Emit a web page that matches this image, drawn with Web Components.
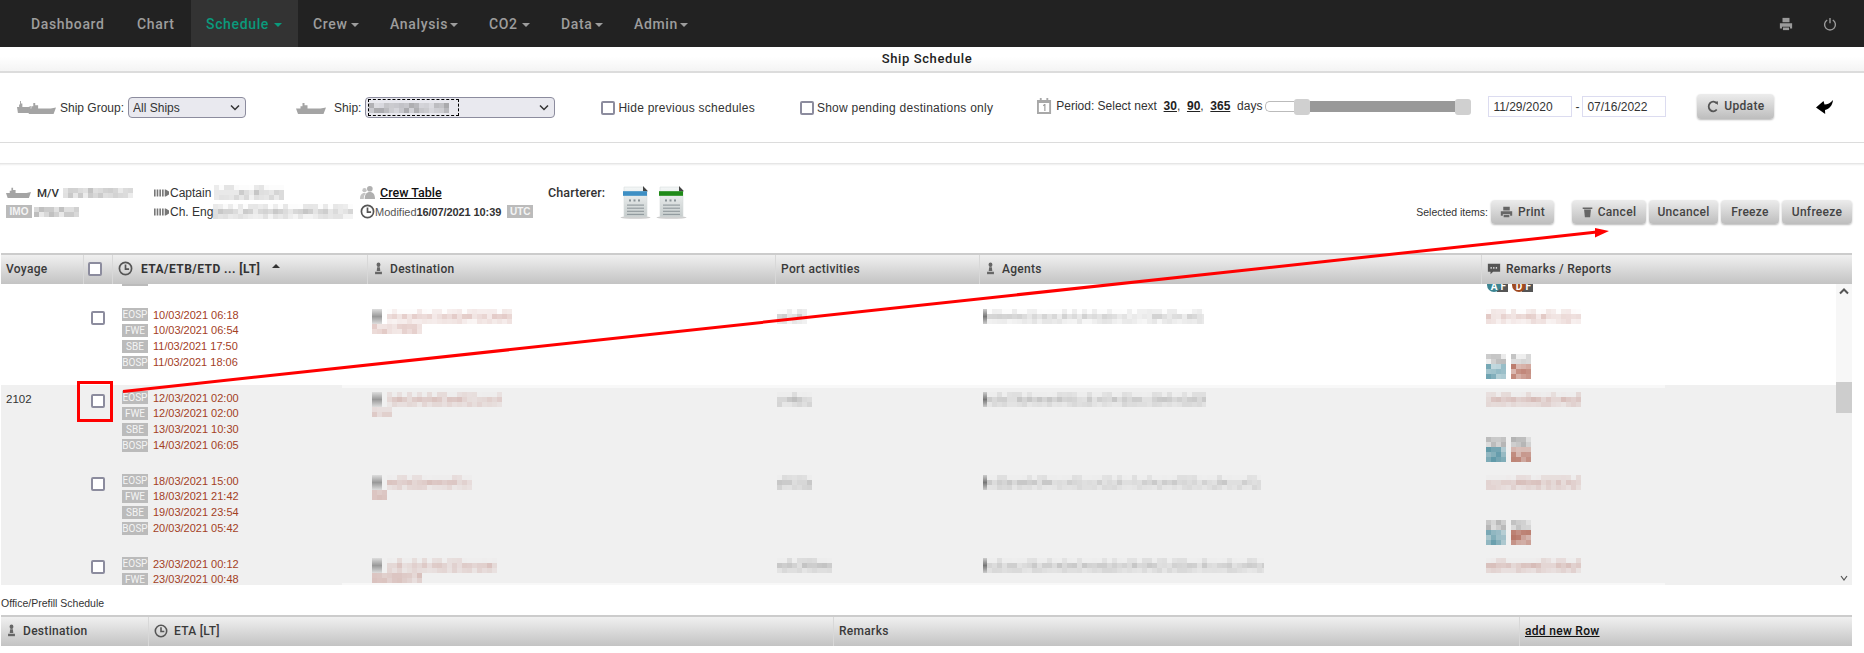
<!DOCTYPE html>
<html lang="en">
<head>
<meta charset="utf-8">
<title>Ship Schedule</title>
<style>
html,body{margin:0;padding:0;background:#fff;overflow:hidden}
body{font:11px "Liberation Sans",Arial,sans-serif;color:#333}
</style>
</head>
<body>
<schedule-page>
  <app-nav slot="nav">
    <nav-item tw="75">Dashboard</nav-item>
    <nav-item tw="38">Chart</nav-item>
    <nav-item tw="64" active menu>Schedule</nav-item>
    <nav-item tw="34" menu>Crew</nav-item>
    <nav-item tw="56" menu>Analysis</nav-item>
    <nav-item tw="29" menu>CO2</nav-item>
    <nav-item tw="30" menu>Data</nav-item>
    <nav-item tw="42" menu>Admin</nav-item>
  </app-nav>
  <page-title slot="title">Ship Schedule</page-title>
  <filter-bar slot="filters"></filter-bar>
  <info-bar slot="info"></info-bar>
  <schedule-table slot="table">
    <schedule-row seed="3" dest="125" dest2="50" port="30" agent="217" thumbs>
      <event-line code="EOSP">10/03/2021 06:18</event-line>
      <event-line code="FWE">10/03/2021 06:54</event-line>
      <event-line code="SBE">11/03/2021 17:50</event-line>
      <event-line code="BOSP">11/03/2021 18:06</event-line>
    </schedule-row>
    <schedule-row grey voyage="2102" seed="11" dest="115" dest2="20" port="35" agent="219" thumbs>
      <event-line code="EOSP">12/03/2021 02:00</event-line>
      <event-line code="FWE">12/03/2021 02:00</event-line>
      <event-line code="SBE">13/03/2021 10:30</event-line>
      <event-line code="BOSP">14/03/2021 06:05</event-line>
    </schedule-row>
    <schedule-row grey seed="23" dest="85" dest2="15" port="35" agent="274" thumbs>
      <event-line code="EOSP">18/03/2021 15:00</event-line>
      <event-line code="FWE">18/03/2021 21:42</event-line>
      <event-line code="SBE">19/03/2021 23:54</event-line>
      <event-line code="BOSP">20/03/2021 05:42</event-line>
    </schedule-row>
    <schedule-row grey seed="37" dest="110" dest2="50" port="55" agent="277">
      <event-line code="EOSP">23/03/2021 00:12</event-line>
      <event-line code="FWE">23/03/2021 00:48</event-line>
    </schedule-row>
  </schedule-table>
  <prefill-table slot="prefill"></prefill-table>
</schedule-page>

<script>
const ICONS = {
  printer:'<path d="M4 1h8v5H4z"/><path d="M1 7h14v6h-2.500v-2h-9v2H1z"/><path d="M4.500 12h7v3h-7z"/>',
  power:'<path d="M4.800 3.400a6.200 6.200 0 1 0 6.400 0" fill="none" stroke="currentColor" stroke-width="1.600"/><path d="M8 1v6" fill="none" stroke="currentColor" stroke-width="1.600"/>',
  clock:'<circle cx="8" cy="8" r="6.500" fill="none" stroke="currentColor" stroke-width="1.800"/><path d="M8 3.800V8.600h3.800" fill="none" stroke="currentColor" stroke-width="1.800"/>',
  pawn:'<circle cx="8" cy="3.500" r="2.800"/><path d="M6 6.500h4l.6 4.500H5.400z"/><path d="M3 12h10v3H3z"/>',
  comment:'<path d="M1 2h14v9H7l-3 3v-3H1z"/><g fill="#fff"><rect x="4" y="6" width="1.500" height="1.500"/><rect x="7" y="6" width="1.500" height="1.500"/><rect x="10" y="6" width="1.500" height="1.500"/></g>',
  trash:'<path d="M1 2h14v2H1z"/><path d="M3 4.500h10L11.800 15H4.200z"/>',
  refresh:'<path d="M13 4.300A6 6 0 1 0 13 11.700" fill="none" stroke="currentColor" stroke-width="2.400"/><path d="M10 2.500l4.500-1v4.500z"/>',
  crew:'<circle cx="10.500" cy="4" r="3"/><path d="M5 15c0-5 2-7.500 5.500-7.500S16 10 16 15z"/><circle cx="4.800" cy="5.500" r="2.300" opacity=".75"/><path d="M0 15c0-4 1.500-6.500 4.800-6.500 1 0 1.500.3 1.500.3C5 10 4 12 4 15z" opacity=".75"/>',
  bars:'<path d="M0 2h1.500v10H0zM2.500 2H4v10H2.500zM5 2h1.500v10H5zM7.500 2H9v10H7.500zM10 2h1l3 3v4l-3 3h-1z"/>',
  calendar:'<path d="M0 2h15v14H0z" fill="#a8a8a8"/><path d="M2 5h11v9H2z" fill="#fff"/><path d="M3 0h2v3H3zM10 0h2v3h-2z" fill="#a8a8a8"/><path d="M6.500 7l1.500-1h1v7H7.800V7.600l-1.300.6z" fill="#999"/>',
  back:'<path d="M0 7.500L7.500 1l1 3.500C11.500 4.500 14.500 3 17 0c-.4 5-3.500 9.200-8 10l.2 4z"/>'
};

function shadow(el, html){
  const r = el.attachShadow({mode:'open'});
  r.innerHTML = html;
  return r;
}

class UiIcon extends HTMLElement{
  connectedCallback(){
    const w = this.getAttribute('w')||14, h = this.getAttribute('h')||w;
    const vb = this.getAttribute('vb')||'0 0 16 16';
    shadow(this,`<style>:host{display:inline-flex;flex:none;color:${this.getAttribute('color')||'#666'}}svg{display:block;fill:currentColor}</style>
    <svg width="${w}" height="${h}" viewBox="${vb}" preserveAspectRatio="none">${ICONS[this.getAttribute('name')]}</svg>`);
  }
}
customElements.define('ui-icon',UiIcon);

class ShipIcon extends HTMLElement{
  connectedCallback(){
    shadow(this,`<style>:host{display:inline-flex;flex:none}svg{display:block}</style>
    <svg width="${this.getAttribute('w')||30}" height="${this.getAttribute('h')||13}" viewBox="0 0 30 13" preserveAspectRatio="none" fill="${this.getAttribute('color')||'#a4a4a4'}">
    <path d="M0 7h4.500V4.500h2V1h2v2.500h3V7h13L30 6 27.500 13H2z"/></svg>`);
  }
}
customElements.define('ship-icon',ShipIcon);

/* mosaic stand-in for text that the reference has pixelated away */
class PixBlock extends HTMLElement{
  connectedCallback(){
    const w=+this.getAttribute('w'), h=+this.getAttribute('h')||15, seed=+this.getAttribute('seed')||1;
    const tint={pink:'178,110,100',grey:'105,105,105',dark:'80,80,80',teal:'50,125,145',rust:'165,80,60',thumb:'120,120,120'}[this.getAttribute('tint')||'pink'];
    const lo=+this.getAttribute('lo')||.12, hi=+this.getAttribute('hi')||.36, flat=this.hasAttribute('flat');
    let x=seed*7+3, cells='';
    for(let j=0;j<h;j+=5)for(let i=0;i<w;i+=5){
      x=(x*1103515245+12345)&0x7fffffff;
      const r=((x>>8)&255)/255;
      let a=lo+(hi-lo)*r;
      if(!flat&&j===0&&h>10) a*=r>.55?.45:.1;
      if(!flat&&j+5>=h&&h>10) a*=.6;
      cells+=`<rect x="${i}" y="${j}" width="5" height="5" fill="rgba(${tint},${a.toFixed(2)})"/>`;
    }
    shadow(this,`<style>:host{display:inline-block;vertical-align:top;line-height:0;flex:none}svg{display:block}</style>
    <svg width="${w}" height="${h}" shape-rendering="crispEdges">${cells}</svg>`);
  }
}
customElements.define('pix-block',PixBlock);

class SchedulePage extends HTMLElement{
  connectedCallback(){
    shadow(this,`<style>
    :host{display:flex;flex-direction:column;position:relative;width:1864px;height:653px;overflow:hidden;background:#fff;font:11px "Liberation Sans",Arial,sans-serif;color:#333}
    .arrow{position:absolute;left:0;top:0;pointer-events:none}
    </style>
    <slot name="nav"></slot><slot name="title"></slot><slot name="filters"></slot>
    <slot name="info"></slot><slot name="table"></slot><slot name="prefill"></slot>
    <svg class="arrow" width="1864" height="653">
      <rect x="342" y="383" width="1323" height="5" fill="rgba(255,255,255,.55)"/>
      <rect x="342" y="583" width="1323" height="5" fill="rgba(255,255,255,.55)"/>
      <rect x="78.500" y="382.500" width="33" height="38" fill="none" stroke="#f00" stroke-width="3"/>
      <path d="M123 391.500L1597 232" stroke="#f00" stroke-width="3" fill="none"/>
      <path d="M1609 231L1595 228v9.500z" fill="#f00"/>
    </svg>`);
  }
}
customElements.define('schedule-page',SchedulePage);

class AppNav extends HTMLElement{
  connectedCallback(){
    shadow(this,`<style>
    :host{display:flex;align-items:stretch;height:47px;flex:none;background:#222;padding-left:15.500px}
    .tools{margin-left:auto;display:flex;align-items:center;gap:30px;padding:0 27px 0 0}
    </style><slot></slot>
    <div class="tools"><ui-icon name="printer" w="14" h="14" color="#9a9a9a"></ui-icon><ui-icon name="power" w="14" h="14" color="#9a9a9a"></ui-icon></div>`);
  }
}
customElements.define('app-nav',AppNav);

class NavItem extends HTMLElement{
  connectedCallback(){
    const act=this.hasAttribute('active'), menu=this.hasAttribute('menu');
    shadow(this,`<style>
    :host{display:flex;align-items:center;gap:4px;padding:0 15.500px;font:500 14px Roboto,sans-serif;letter-spacing:.65px;
      color:${act?'#0a9a7c':'#9d9d9d'};background:${act?'#333':'transparent'}}
    span{display:block;width:${this.getAttribute('tw')}px;white-space:nowrap}
    i{width:0;height:0;border:4px solid transparent;border-top-color:currentColor;border-bottom:0;margin-top:2px}
    </style><span><slot></slot></span>${menu?'<i></i>':''}`);
  }
}
customElements.define('nav-item',NavItem);

class PageTitle extends HTMLElement{
  connectedCallback(){
    shadow(this,`<style>
    :host{display:block;flex:none;height:24px;padding-right:10px;text-align:center;font:500 13px/24px Roboto,sans-serif;color:#222;letter-spacing:.6px;
      background:linear-gradient(#fff 40%,#f4f4f4);border-bottom:2px solid #dcdcdc}
    </style><slot></slot>`);
  }
}
customElements.define('page-title',PageTitle);

const CHECK = `input[type=checkbox]{appearance:none;-webkit-appearance:none;margin:0;width:14px;height:14px;box-sizing:border-box;border:2px solid #8c8c9e;border-radius:2px;background:#fff;flex:none;display:block}`;

class FilterBar extends HTMLElement{
  connectedCallback(){
    shadow(this,`<style>
    :host{display:flex;align-items:center;flex:none;height:70px;box-sizing:border-box;border-bottom:1px solid #dcdcdc;font:12px "Liberation Sans",Arial,sans-serif;color:#333;padding-left:17px}
    ${CHECK}
    .group{position:relative;display:inline-flex;width:39px;height:15px;flex:none}
    .group ship-icon:last-child{margin-left:-4px;margin-top:2px}
    .sel{position:relative;box-sizing:border-box;height:21px;border:1px solid #8c8c9e;border-radius:4px;background:#e9e9ef;display:flex;align-items:center;flex:none}
    select{appearance:none;-webkit-appearance:none;border:0;background:transparent;font:12px "Liberation Sans",Arial,sans-serif;color:#333;padding:0 4px;height:19px;width:100%;outline:0}
    .chev{position:absolute;right:5px;top:6px;pointer-events:none}
    .focus{display:flex;align-items:center;height:17px;width:91px;box-sizing:border-box;border:1px dashed #000;margin-left:2px;overflow:hidden}
    .chk{display:flex;align-items:center;gap:3px;flex:none;letter-spacing:.25px;margin-top:1px}
    u{font-weight:bold;color:#222}
    .period{display:flex;align-items:center;white-space:pre;flex:none;font-size:12px;margin-top:-3px}
    .slider{display:flex;align-items:center;width:206px;height:16px;flex:none;margin-left:3px;margin-top:-2px}
    .rest{width:29px;height:11px;box-sizing:border-box;border:1px solid #bbb;border-right:0;border-radius:5px 0 0 5px;background:#fff}
    .h{width:16px;height:16px;background:#d0d0d0;border-radius:3px}
    .fill{flex:1;height:11px;background:#999}
    input[type=text]{box-sizing:border-box;width:84px;height:21px;border:1px solid #dcdcf0;padding:0 4px;font:12px "Liberation Sans",Arial,sans-serif;color:#333;margin:0;outline:0;flex:none}
    .dates{display:flex;align-items:center;gap:0;margin-left:17px;margin-top:-2px;flex:none}
    .dates span{width:10px;text-align:center}
    ui-btn{margin-left:31px;margin-top:-3px}
    .back{margin-left:42px;margin-top:-1px}
    </style>
    <span class="group"><ship-icon w="14" h="13"></ship-icon><ship-icon w="29" h="12"></ship-icon></span>
    <span style="margin-left:4px">Ship Group:</span>
    <div class="sel" style="width:118px;margin-left:4px"><select><option>All Ships</option></select>
      <svg class="chev" width="10" height="8" viewBox="0 0 10 8"><path d="M1 1.500l4 4 4-4" fill="none" stroke="#333" stroke-width="1.500"/></svg></div>
    <ship-icon style="margin-left:50px" w="30" h="12"></ship-icon>
    <span style="margin-left:8px">Ship:</span>
    <div class="sel" style="width:190px;margin-left:4px"><div class="focus"><pix-block w="80" h="10" tint="grey" seed="5" lo=".1" hi=".5"></pix-block></div>
      <svg class="chev" width="10" height="8" viewBox="0 0 10 8"><path d="M1 1.500l4 4 4-4" fill="none" stroke="#333" stroke-width="1.500"/></svg></div>
    <label class="chk" style="margin-left:46px"><input type="checkbox"><span>Hide previous schedules</span></label>
    <label class="chk" style="margin-left:45px"><input type="checkbox"><span>Show pending destinations only</span></label>
    <div class="period" style="margin-left:44px"><ui-icon name="calendar" w="15" h="16" color="#a8a8a8"></ui-icon><span style="margin-left:4px">Period: Select next  <u>30</u>,  <u>90</u>,  <u>365</u>  days</span></div>
    <div class="slider"><div class="rest"></div><div class="h"></div><div class="fill"></div><div class="h"></div></div>
    <div class="dates"><input type="text" value="11/29/2020"><span>-</span><input type="text" value="07/16/2022"></div>
    <ui-btn style="width:77px;height:25px;justify-content:center"><ui-icon name="refresh" w="12" h="13" color="#555"></ui-icon>Update</ui-btn>
    <ui-icon class="back" name="back" vb="0 0 17 14" w="17" h="14" color="#000"></ui-icon>`);
  }
}
customElements.define('filter-bar',FilterBar);

class UiBtn extends HTMLElement{
  connectedCallback(){
    shadow(this,`<style>
    :host{display:inline-flex;align-items:center;justify-content:center;gap:5px;box-sizing:border-box;height:24px;padding:0;border-radius:4px;flex:none;
      background:linear-gradient(#ececec,#bdbdbd);box-shadow:0 1px 2px rgba(0,0,0,.28);font:500 12px Roboto,sans-serif;letter-spacing:.3px;color:#444}
    </style><slot></slot>`);
  }
}
customElements.define('ui-btn',UiBtn);

class GreyBadge extends HTMLElement{
  connectedCallback(){
    const bold=this.hasAttribute('bold');
    shadow(this,`<style>
    :host{display:inline-block;box-sizing:border-box;width:26px;height:13px;text-align:center;background:#bbb;color:#f4f4f4;font:${bold?'bold 10px':'10px'}/13px ${bold?'"Liberation Sans"':'Roboto'},sans-serif;flex:none;white-space:nowrap;overflow:visible}
    </style><slot></slot>`);
  }
}
customElements.define('grey-badge',GreyBadge);

class InfoBar extends HTMLElement{
  connectedCallback(){
    shadow(this,`<style>
    :host{display:flex;flex:none;height:90px;box-sizing:border-box;border-top:1px solid #e6e6e6;margin-top:20px;padding:19px 0 0 6px;font:12px "Liberation Sans",Arial,sans-serif;color:#333;box-shadow:inset 0 2px 2px -1px #eee}
    .col{display:flex;flex-direction:column;gap:0;flex:none}
    .r{display:flex;align-items:center;height:19px;white-space:nowrap}
    b{font-weight:bold;color:#333}
    a{font:500 12.500px Roboto,sans-serif;color:#111;text-decoration:underline}
    .sel{margin-left:auto;display:flex;align-items:center;align-self:flex-start;margin-top:16px;padding-right:12px;font-size:10.500px}
    .docs{display:flex;gap:5px}
    </style>
    <div class="col" style="width:148px">
      <div class="r"><ship-icon w="25" h="11"></ship-icon><span style="margin-left:6px"><b style="font-weight:500;font-family:Roboto;font-size:11.500px">M/V</b></span><pix-block style="margin-left:4px" w="70" h="10" tint="grey" seed="8" hi=".4"></pix-block></div>
      <div class="r"><grey-badge bold>IMO</grey-badge><pix-block style="margin-left:2px" w="45" h="10" tint="grey" seed="9" hi=".45"></pix-block></div>
    </div>
    <div class="col" style="width:206px">
      <div class="r"><ui-icon name="bars" w="15" h="10" vb="0 0 14 14" color="#777"></ui-icon><span style="margin-left:1px">Captain</span><pix-block style="margin-left:3px" w="70" h="15" tint="grey" seed="10" hi=".42"></pix-block></div>
      <div class="r"><ui-icon name="bars" w="15" h="10" vb="0 0 14 14" color="#777"></ui-icon><span style="margin-left:1px">Ch. Eng</span><pix-block w="140" h="15" tint="grey" seed="12" hi=".38"></pix-block></div>
    </div>
    <div class="col" style="width:188px">
      <div class="r"><ui-icon name="crew" w="15" h="15" color="#b0b0b0"></ui-icon><a style="margin-left:5px">Crew Table</a></div>
      <div class="r" style="font-size:11px"><ui-icon name="clock" w="15" h="15" color="#555"></ui-icon><span style="color:#555">Modified</span><b style="letter-spacing:-.1px">16/07/2021 10:39</b><grey-badge style="margin-left:6px" bold>UTC</grey-badge></div>
    </div>
    <div class="r" style="align-self:flex-start;width:72px;font-family:Roboto;font-weight:500;font-size:12.500px;letter-spacing:.1px">Charterer:</div>
    <div class="docs" style="margin-top:2px"><doc-icon color="#3e8fc4"></doc-icon><doc-icon color="#1f8a18"></doc-icon></div>
    <div class="sel"><span style="margin-right:3px">Selected items:</span>
      <ui-btn style="width:63px;height:24px;margin-top:1px"><ui-icon name="printer" w="13" h="12" color="#666"></ui-icon>Print</ui-btn>
      <ui-btn style="width:74px;margin-left:18px"><ui-icon name="trash" w="11" h="12" color="#666"></ui-icon>Cancel</ui-btn>
      <ui-btn style="width:69px;margin-left:3px">Uncancel</ui-btn>
      <ui-btn style="width:58px;margin-left:3px">Freeze</ui-btn>
      <ui-btn style="width:70px;margin-left:3px">Unfreeze</ui-btn>
    </div>`);
  }
}
customElements.define('info-bar',InfoBar);

class DocIcon extends HTMLElement{
  connectedCallback(){
    const c=this.getAttribute('color');
    shadow(this,`<style>:host{display:block;flex:none}svg{display:block}</style>
    <svg width="31" height="34" viewBox="0 0 31 33" preserveAspectRatio="none">
      <defs><linearGradient id="g" x1="0" x2="0" y1="0" y2="1"><stop offset="0" stop-color="#f4f7f7"/><stop offset="1" stop-color="#c6cccc"/></linearGradient></defs>
      <ellipse cx="15.500" cy="31.500" rx="15" ry="1.300" fill="#ccc"/>
      <path d="M4 2h19l4 4v25H4z" fill="url(#g)" stroke="#d8dcdc" stroke-width=".6"/>
      <path d="M23 1l5 5h-5z" fill="#444"/>
      <rect x="3" y="6" width="24" height="4.500" fill="${c}"/>
      <g fill="#8b9498"><rect x="9" y="14" width="2" height="2"/><rect x="13.500" y="14" width="2" height="2"/><rect x="18" y="14" width="2" height="2"/>
      <rect x="7" y="19" width="17" height="1"/><rect x="7" y="22" width="17" height="1"/><rect x="7" y="25" width="17" height="1"/><rect x="7" y="28" width="17" height="1"/></g>
    </svg>`);
  }
}
customElements.define('doc-icon',DocIcon);

const HEAD = `
  .head{display:grid;height:31px;box-sizing:border-box;border-top:2px solid #ccc;background:linear-gradient(#f0f0f0,#c3c3c3);font:500 12px Roboto,sans-serif;letter-spacing:.3px;color:#3a3a3a}
  .head>div{display:flex;align-items:center;gap:6px;padding:0 0 2px 5px;border-left:1px solid #d8d8d8;white-space:nowrap;min-width:0}
  .head>div:first-child{border-left:0}`;

class ScheduleTable extends HTMLElement{
  connectedCallback(){
    shadow(this,`<style>
    :host{display:block;flex:none;margin:0 12px 0 1px;width:1851px}
    ${HEAD}${CHECK}
    .head{grid-template-columns:82px 29px 255px 408px 204px 502px 1fr}
    .body{display:flex;height:301px;overflow:hidden}
    .rows{flex:1;min-width:0;overflow:hidden;display:flex;flex-direction:column;height:301px}
    .stub{flex:none;height:18px;position:relative;display:grid;grid-template-columns:121px 1fr 355px}
    .stub .end{grid-column:1;display:block;margin-left:121px;width:26px;height:2px;background:#bbb}
    .tags{grid-column:3;display:flex;gap:4px;padding-left:6px;height:9px;overflow:hidden}
    .tag{display:block;width:21px;height:9px;position:relative;color:#fff;font:bold 10px/10px Roboto,sans-serif}
    .tag s{position:absolute;right:0;top:0;width:11px;height:8px;background:#555}
    .tag i{position:absolute;left:0;top:-6px;width:14px;height:14px;border-radius:50%;background:var(--c);font-style:normal;text-align:center;line-height:10px;padding-top:4px;box-sizing:border-box}
    .tag span{position:absolute;right:2px;top:-2px}
    .bar{flex:none;width:16px;background:#f4f4f4;display:flex;flex-direction:column;align-items:center;position:relative}
    .bar .space{width:100%;background:#f7f7f7}
    .bar .thumb{width:100%;height:31px;background:#cdcdcd}
    .bar .up{position:absolute;top:4px}
    .bar .down{position:absolute;bottom:4px}
    .bar .rest{flex:1;width:100%;background:#f0f0f0}
    </style>
    <div class="head">
      <div>Voyage</div>
      <div style="padding-left:4px"><input type="checkbox"></div>
      <div><ui-icon name="clock" w="15" h="15" color="#555"></ui-icon><b style="margin-left:2px;font-weight:bold;letter-spacing:.45px;color:#333">ETA/ETB/ETD ... [LT]</b><i style="width:0;height:0;border:4px solid transparent;border-bottom-color:#333;border-top:0;margin:-5px 0 0 6px"></i></div>
      <div><ui-icon name="pawn" w="11" h="13" color="#666"></ui-icon>Destination</div>
      <div>Port activities</div>
      <div><ui-icon name="pawn" w="11" h="13" color="#666"></ui-icon>Agents</div>
      <div style="gap:5px"><ui-icon name="comment" w="14" h="14" color="#555"></ui-icon>Remarks / Reports</div>
    </div>
    <div class="body">
      <div class="rows">
        <div class="stub"><span class="end"></span>
          <div class="tags"><span class="tag" style="--c:#3c8592"><s></s><i>A</i><span>F</span></span><span class="tag" style="--c:#a04a20"><s></s><i>D</i><span>F</span></span></div>
        </div>
        <slot></slot>
      </div>
      <div class="bar">
        <div class="space" style="height:98px"></div>
        <div class="thumb"></div><div class="rest"></div>
        <svg class="up" width="10" height="7" viewBox="0 0 10 7"><path d="M1 5.500l4-4 4 4" fill="none" stroke="#555" stroke-width="2"/></svg>
        <svg class="down" width="8" height="6" viewBox="0 0 8 6"><path d="M1 1l3 4 3-4" fill="none" stroke="#555" stroke-width="1.200"/></svg>
      </div>
    </div>`);
  }
}
customElements.define('schedule-table',ScheduleTable);

class ScheduleRow extends HTMLElement{
  connectedCallback(){
    const a=n=>this.getAttribute(n), s=+a('seed');
    const thumb=(t,k)=>`<div class="th"><pix-block flat w="20" h="10" tint="thumb" seed="${k}" lo=".12" hi=".5"></pix-block><pix-block flat w="20" h="15" tint="${t}" seed="${k+1}" lo=".3" hi=".75"></pix-block></div>`;
    const thumbs=this.hasAttribute('thumbs')?`<div class="thumbs">${thumb('teal',s+1)}${thumb('rust',s+2)}</div>`:'';
    shadow(this,`<style>
    :host{display:grid;grid-template-columns:82px 29px 255px 408px 204px 502px 1fr;height:83px;flex:none;background:${this.hasAttribute('grey')?'#f0f0f0':'#fff'};font:11px "Liberation Sans",Arial,sans-serif;color:#333}
    ${CHECK}
    .v{padding:7px 0 0 5px;font-size:11.500px;line-height:14px}
    .c{padding:9px 0 0 8px}
    .e{padding:5px 0 0 10px}
    .d{padding:7px 0 0 5px;display:flex;flex-direction:column;align-items:flex-start}
    .l{display:flex}
    .l i{display:block;width:10px;height:15px;background:linear-gradient(#ddd,#999 50%,#ddd);margin-right:5px}
    .p{padding:7px 0 0 2px}
    .a{padding:7px 0 0 4px;display:flex;align-items:flex-start}
    .a i{display:block;width:4px;height:15px;background:linear-gradient(#ccc,#777 50%,#ccc)}
    .r{padding:7px 0 0 5px}
    .thumbs{display:flex;gap:5px;margin-top:30px}
    .th{display:flex;flex-direction:column}
    </style>
    <div class="v">${a('voyage')||''}</div>
    <div class="c"><input type="checkbox"></div>
    <div class="e"><slot></slot></div>
    <div class="d"><div class="l"><i></i><pix-block w="${a('dest')}" h="15" seed="${s}"></pix-block></div><pix-block w="${a('dest2')}" h="10" seed="${s+3}"></pix-block></div>
    <div class="p"><pix-block w="${a('port')}" h="15" tint="grey" seed="${s+4}"></pix-block></div>
    <div class="a"><i></i><pix-block w="${a('agent')}" h="15" tint="grey" seed="${s+5}" lo=".1" hi=".3"></pix-block></div>
    <div class="r"><pix-block w="95" h="15" seed="${s+6}" lo=".15" hi=".4"></pix-block>${thumbs}</div>`);
  }
}
customElements.define('schedule-row',ScheduleRow);

class EventLine extends HTMLElement{
  connectedCallback(){
    shadow(this,`<style>
    :host{display:flex;align-items:center;height:16px;font:11px "Liberation Sans",Arial,sans-serif;color:#a3401f;white-space:nowrap}
    :host(:first-child){height:15px}
    span{margin-left:5px}
    </style><grey-badge>${this.getAttribute('code')}</grey-badge><span><slot></slot></span>`);
  }
}
customElements.define('event-line',EventLine);

class PrefillTable extends HTMLElement{
  connectedCallback(){
    shadow(this,`<style>
    :host{display:block;flex:none;margin-left:1px;width:1851px;font:10.500px "Liberation Sans",Arial,sans-serif;color:#333}
    .cap{height:30px;line-height:36px;white-space:nowrap}
    ${HEAD}
    .head{grid-template-columns:147px 685px 686px 1fr;color:#3a3a3a}
    a{font:500 12px Roboto,sans-serif;color:#111;text-decoration:underline}
    </style>
    <div class="cap">Office/Prefill Schedule</div>
    <div class="head">
      <div><ui-icon name="pawn" w="11" h="13" color="#666"></ui-icon>Destination</div>
      <div><ui-icon name="clock" w="14" h="14" color="#555"></ui-icon>ETA [LT]</div>
      <div>Remarks</div>
      <div><a>add new Row</a></div>
    </div>`);
  }
}
customElements.define('prefill-table',PrefillTable);
</script>
</body>
</html>
